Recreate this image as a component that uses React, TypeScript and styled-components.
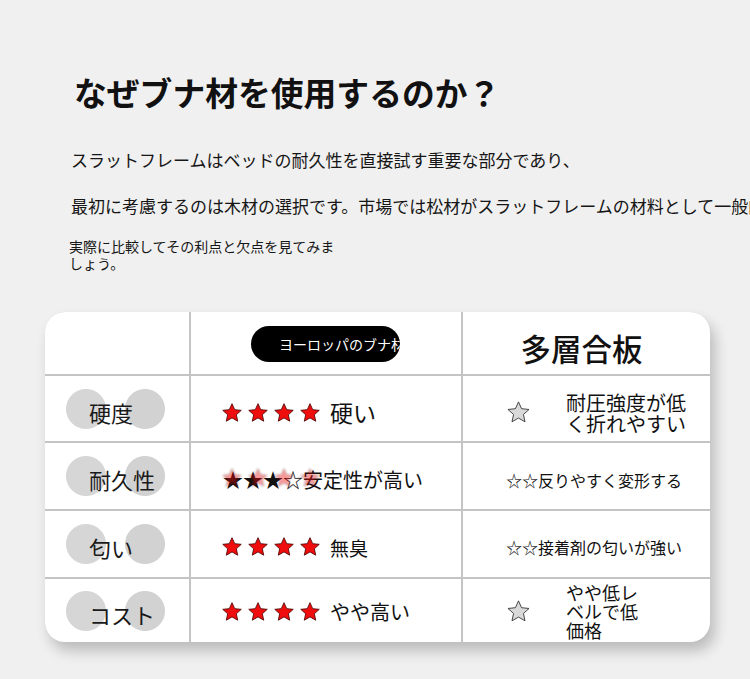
import React from 'react';
import styled, { createGlobalStyle } from 'styled-components';

const GlobalStyle = createGlobalStyle`
  html, body {
    margin: 0;
    padding: 0;
    background: #f0f0f0;
  }
  body {
    font-family: "Noto Sans CJK JP", "Noto Sans", sans-serif;
    color: #111;
    overflow: hidden;
  }
`;

type BeechCellData =
  | { kind: 'stars'; text: string; size: number }
  | { kind: 'ghost'; text: string };

type PlyCellData =
  | { kind: 'star'; text: string; size: number; width: string }
  | { kind: 'plain'; text: string };

interface RowData {
  label: string;
  shift: number;
  beech: BeechCellData;
  ply: PlyCellData;
}

const rows: RowData[] = [
  {
    label: '硬度',
    shift: 4,
    beech: { kind: 'stars', text: '硬い', size: 23 },
    ply: { kind: 'star', text: '耐圧強度が低く折れやすい', size: 20, width: '6.05em' },
  },
  {
    label: '耐久性',
    shift: 4,
    beech: { kind: 'ghost', text: '★★★☆安定性が高い' },
    ply: { kind: 'plain', text: '☆☆反りやすく変形する' },
  },
  {
    label: '匂い',
    shift: 3,
    beech: { kind: 'stars', text: '無臭', size: 19 },
    ply: { kind: 'plain', text: '☆☆接着剤の匂いが強い' },
  },
  {
    label: 'コスト',
    shift: 1,
    beech: { kind: 'stars', text: 'やや高い', size: 20 },
    ply: { kind: 'star', text: 'やや低レベルで低価格', size: 18, width: '4.05em' },
  },
];

const STAR_PATH =
  'M12 1.8l2.95 6.55 7.15.75-5.35 4.8 1.5 7.05L12 17.35 5.75 20.95l1.5-7.05L1.9 9.1l7.15-.75z';

function Star({ fill, stroke, size }: { fill: string; stroke: string; size: number }) {
  return (
    <svg width={size} height={size} viewBox="0 0 24 24">
      <path d={STAR_PATH} fill={fill} stroke={stroke} strokeWidth={0.9} strokeLinejoin="round" />
    </svg>
  );
}

function RedStars() {
  return (
    <StarRow>
      {[0, 1, 2, 3].map((i) => (
        <Star key={i} fill="#f00d0d" stroke="#4a0000" size={22} />
      ))}
    </StarRow>
  );
}

export default function App() {
  return (
    <Page>
      <GlobalStyle />
      <Title>なぜブナ材を使用するのか？</Title>
      <Lead>スラットフレームはベッドの耐久性を直接試す重要な部分であり、</Lead>
      <Lead $gap={22}>
        最初に考慮するのは木材の選択です。市場では松材がスラットフレームの材料として一般的です。
      </Lead>
      <Note>実際に比較してその利点と欠点を見てみましょう。</Note>

      <Card>
        <HeaderCell />
        <HeaderCell>
          <Pill>ヨーロッパのブナ材</Pill>
        </HeaderCell>
        <HeaderCell $center>
          <PlyTitle>多層合板</PlyTitle>
        </HeaderCell>

        {rows.map((row) => (
          <React.Fragment key={row.label}>
            <LabelCell>
              <Label>{row.label}</Label>
            </LabelCell>

            <BeechCell $shift={row.shift}>
              {row.beech.kind === 'stars' ? (
                <>
                  <RedStars />
                  <BeechText $size={row.beech.size}>{row.beech.text}</BeechText>
                </>
              ) : (
                <GhostWrap>
                  <GhostText>{row.beech.text}</GhostText>
                  <GhostStars>
                    <RedStars />
                  </GhostStars>
                </GhostWrap>
              )}
            </BeechCell>

            <PlyCell $shift={row.shift}>
              {row.ply.kind === 'star' ? (
                <>
                  <Star fill="#d9d9d9" stroke="#3c3c3c" size={25} />
                  <PlyText $size={row.ply.size} $width={row.ply.width}>
                    {row.ply.text}
                  </PlyText>
                </>
              ) : (
                <PlyPlain>{row.ply.text}</PlyPlain>
              )}
            </PlyCell>
          </React.Fragment>
        ))}
      </Card>
    </Page>
  );
}

const Page = styled.div`
  width: 750px;
  height: 679px;
  padding-top: 72px;
  box-sizing: border-box;
  overflow: hidden;
`;

const Title = styled.h1`
  margin: 0 0 0 74px;
  font-size: 32.8px;
  line-height: 40px;
  font-weight: 700;
  color: #111;
`;

const Lead = styled.p<{ $gap?: number }>`
  margin: ${(p) => p.$gap ?? 36}px 0 0 71px;
  font-size: 17px;
  line-height: 24px;
  white-space: nowrap;
  color: #161616;
`;

const Note = styled.p`
  margin: 20px 0 0 69px;
  width: 19.2em;
  font-size: 14px;
  line-height: 17px;
  color: #161616;
`;

const Card = styled.div`
  margin: 40px 0 0 45px;
  width: 665px;
  display: grid;
  grid-template-columns: 144px 270px 247px;
  grid-template-rows: 62px 65px 66px 66px 63px;
  gap: 2px;
  background: #c4c4c4;
  border-radius: 20px;
  overflow: hidden;
  box-shadow: 5px 9px 14px rgba(0, 0, 0, 0.22);
`;

const Cell = styled.div`
  background: #fff;
  display: flex;
  align-items: center;
  box-sizing: border-box;
`;

const HeaderCell = styled(Cell)<{ $center?: boolean }>`
  justify-content: ${(p) => (p.$center ? 'center' : 'flex-start')};
  padding: ${(p) => (p.$center ? '9px 10px 0 0' : '1px 0 0 60px')};
`;

const Pill = styled.div`
  width: 149px;
  height: 36px;
  box-sizing: border-box;
  padding-left: 28px;
  border-radius: 18px;
  background: #000;
  color: #fff;
  font-size: 14px;
  line-height: 36px;
  white-space: nowrap;
  overflow: hidden;
`;

const PlyTitle = styled.div`
  font-size: 30.5px;
  font-weight: 500;
  line-height: 36px;
  color: #111;
`;

const LabelCell = styled(Cell)`
  padding-left: 21px;
`;

const Label = styled.div`
  width: 99px;
  height: 42px;
  box-sizing: border-box;
  padding: 5px 0 0 23px;
  font-size: 22px;
  line-height: 38px;
  color: #1a1a1a;
  background:
    radial-gradient(circle at 20px 21px, #d6d6d6 19.5px, rgba(214, 214, 214, 0) 20.5px),
    radial-gradient(circle at 79px 21px, #d2d2d2 19.5px, rgba(210, 210, 210, 0) 20.5px);
`;

const BeechCell = styled(Cell)<{ $shift: number }>`
  padding: ${(p) => p.$shift * 2}px 0 0 30px;
`;

const StarRow = styled.div`
  display: flex;
  gap: 4px;
`;

const BeechText = styled.span<{ $size: number }>`
  margin-left: 9px;
  font-size: ${(p) => p.$size}px;
  line-height: 1;
  color: #111;
`;

const GhostWrap = styled.div`
  position: relative;
  padding-left: 2px;
`;

const GhostText = styled.span`
  font-size: 20px;
  line-height: 26px;
  color: #111;
  white-space: nowrap;
`;

const GhostStars = styled.div`
  position: absolute;
  left: 0;
  top: 0;
  opacity: 0.42;
  filter: blur(0.8px);
`;

const PlyCell = styled(Cell)<{ $shift: number }>`
  padding: ${(p) => p.$shift * 2}px 0 0 43px;
`;

const PlyText = styled.span<{ $size: number; $width: string }>`
  margin-left: 35px;
  width: ${(p) => p.$width};
  font-size: ${(p) => p.$size}px;
  line-height: 1.05;
  color: #111;
`;

const PlyPlain = styled.span`
  font-size: 16px;
  line-height: 22px;
  color: #111;
  white-space: nowrap;
`;
